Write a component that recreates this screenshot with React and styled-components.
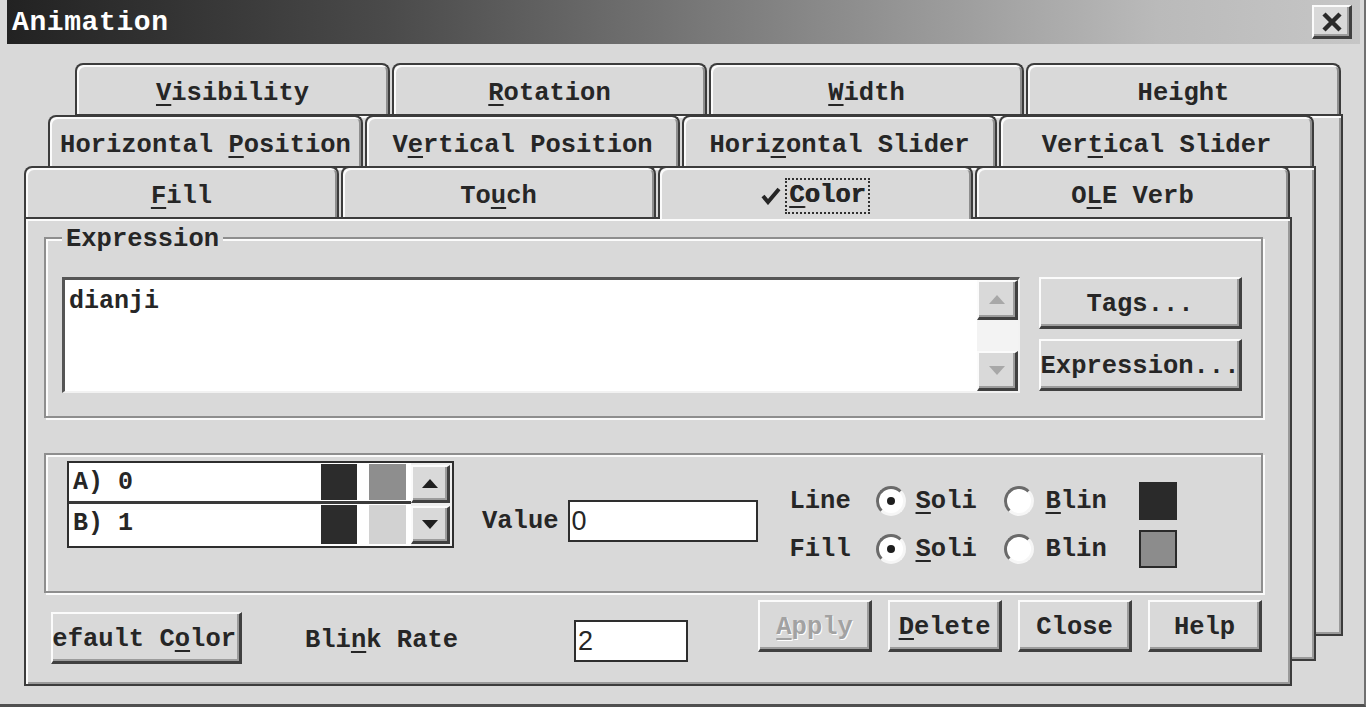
import styled, { createGlobalStyle, css } from "styled-components";

const GlobalStyle = createGlobalStyle`
  html, body {
    margin: 0;
    padding: 0;
    background: #d9d9d9;
  }
  body {
    font-family: "Liberation Mono", "DejaVu Sans Mono", monospace;
    color: #262626;
  }
  * {
    box-sizing: border-box;
  }
`;

const FACE = "#d9d9d9";
const DARK = "#3c3c3c";

const raised = css`
  background: ${FACE};
  border-style: solid;
  border-width: 2px 3px 3px 2px;
  border-color: #fbfbfb #404040 #404040 #fbfbfb;
  box-shadow: inset -2px -2px 0 #9c9c9c;
`;

const Window = styled.div`
  width: 1366px;
  height: 707px;
  padding: 0 4px 0 7px;
  border-right: 2px solid #707070;
  border-bottom: 3px solid #505050;
  background: ${FACE};
  display: flex;
  flex-direction: column;
  overflow: hidden;
`;

const TitleBar = styled.div`
  height: 44px;
  flex: 0 0 44px;
  display: flex;
  align-items: center;
  justify-content: space-between;
  padding: 0 8px 0 5px;
  background: linear-gradient(90deg, #222 0%, #4a4a4a 28%, #858585 58%, #bababa 85%, #c6c6c6 100%);
`;

const Title = styled.span`
  font-size: 28px;
  font-weight: 700;
  color: #fff;
  letter-spacing: 0.6px;
`;

const CloseButton = styled.div`
  ${raised};
  width: 40px;
  height: 34px;
  display: flex;
  align-items: center;
  justify-content: center;
`;

const Body = styled.div`
  padding: 19px 0 0 17px;
`;

const Deck = styled.div`
  display: grid;
  width: 1320px;
  height: 623px;
`;

const Layer = styled.div`
  grid-area: 1 / 1;
  margin-left: ${(p) => p.$x}px;
  margin-top: ${(p) => p.$y}px;
  width: 1268px;
  height: ${(p) => p.$h}px;
  display: flex;
  flex-direction: column;
`;

const TabRow = styled.div`
  display: flex;
  gap: 2px;
  height: 51px;
  flex: 0 0 51px;
  position: relative;
  z-index: 1;
`;

const Tab = styled.div`
  flex: 0 0 315px;
  height: ${(p) => (p.$active ? "53px" : "100%")};
  border: 2px solid ${DARK};
  border-bottom: none;
  border-radius: 8px 8px 0 0;
  background: ${FACE};
  box-shadow: inset 2px 2px 0 #fbfbfb, inset -2px 0 0 #8e8e8e;
  display: flex;
  align-items: center;
  justify-content: center;
  padding-top: ${(p) => (p.$active ? "4px" : "7px")};
  font-size: 25.5px;
  font-weight: 700;
  white-space: pre;
`;

const Page = styled.div`
  flex: 1;
  border: 2px solid ${DARK};
  background: ${FACE};
  box-shadow: inset 2px 2px 0 #fbfbfb, inset -2px -2px 0 #9a9a9a;
  padding: ${(p) => (p.$front ? "4px 0 0 18px" : "0")};
`;

const Mn = styled.span`
  text-decoration: underline;
  text-decoration-thickness: 2px;
  text-underline-offset: 4px;
`;

const FocusLabel = styled.span`
  display: inline-flex;
  align-items: center;
  gap: 4px;
  text-shadow: 0.6px 0 0 #262626;
`;

const Focus = styled.span`
  border: 2px dotted #303030;
  padding: 0 2px;
  line-height: 32px;
`;

const Group = styled.fieldset`
  margin: 0;
  width: ${(p) => p.$w}px;
  height: ${(p) => p.$h}px;
  border: 2px solid #8e8e8e;
  box-shadow: inset 2px 2px 0 #fbfbfb, 2px 2px 0 #fbfbfb;
  padding: ${(p) => p.$pad};
  margin-top: ${(p) => p.$mt || 0}px;
  min-inline-size: 0;
`;

const Legend = styled.legend`
  margin-left: 0;
  padding: 4px 4px 0;
  font-size: 25.5px;
  font-weight: 700;
  line-height: 26px;
  background: ${FACE};
  position: relative;
`;

const ExprRow = styled.div`
  display: flex;
  gap: 19px;
  align-items: flex-start;
`;

const TextBox = styled.div`
  width: 958px;
  height: 116px;
  background: #fff;
  border-style: solid;
  border-width: 3px 2px 2px 3px;
  border-color: #555 #f2f2f2 #f2f2f2 #555;
  display: flex;
`;

const TextValue = styled.div`
  flex: 1;
  padding: 8px 4px;
  font-size: 25px;
  font-weight: 700;
  line-height: 28px;
`;

const ScrollTrack = styled.div`
  width: 41px;
  display: flex;
  flex-direction: column;
  justify-content: space-between;
  background: #f3f3f3;
`;

const ScrollBtn = styled.div`
  ${raised};
  width: ${(p) => p.$w || 41}px;
  height: ${(p) => p.$h || 40}px;
  display: flex;
  align-items: center;
  justify-content: center;
`;

const ButtonColumn = styled.div`
  display: flex;
  flex-direction: column;
  gap: 10px;
`;

const Button = styled.div`
  ${raised};
  width: ${(p) => p.$w}px;
  height: 52px;
  margin-top: ${(p) => p.$mt || 0}px;
  display: flex;
  align-items: center;
  justify-content: ${(p) => (p.$clip ? "flex-end" : "center")};
  padding: ${(p) => (p.$clip ? "3px 3px 0 0" : "3px 0 0")};
  overflow: hidden;
  white-space: pre;
  font-size: 25.5px;
  font-weight: 700;
  color: ${(p) => (p.$disabled ? "#a2a2a2" : "#262626")};
  text-shadow: ${(p) => (p.$disabled ? "1px 1px 0 #fff" : "none")};
  flex-shrink: 0;
`;

const ColorRow = styled.div`
  display: flex;
  align-items: flex-start;
`;

const ListBox = styled.div`
  width: 387px;
  height: 87px;
  border: 2px solid #2e2e2e;
  background: #fff;
  display: flex;
`;

const ListRows = styled.div`
  flex: 1;
  display: flex;
  flex-direction: column;
`;

const ListRow = styled.div`
  height: 41px;
  display: flex;
  align-items: stretch;
  border-bottom: ${(p) => (p.$divider ? "3px solid #3a3a3a" : "none")};
`;

const RowLabel = styled.div`
  flex: 1;
  padding: 5px 0 0 4px;
  font-size: 25px;
  font-weight: 700;
  line-height: 30px;
`;

const RowSwatch = styled.div`
  width: ${(p) => p.$w}px;
  margin: 1px ${(p) => p.$mr}px 1px 0;
  background: ${(p) => p.$c};
`;

const ListScroll = styled.div`
  width: 41px;
  display: flex;
  flex-direction: column;
  justify-content: space-between;
  padding: 2px 0;
  background: #efefef;
`;

const ValueField = styled.div`
  display: flex;
  align-items: center;
  gap: 9px;
  margin: ${(p) => p.$m};
`;

const Label = styled.span`
  font-size: 25.5px;
  font-weight: 700;
  white-space: nowrap;
  margin: ${(p) => p.$m || 0};
`;

const Input = styled.div`
  width: ${(p) => p.$w}px;
  height: 42px;
  border: 2px solid #2e2e2e;
  background: #fff;
  padding-left: 2px;
  display: flex;
  align-items: center;
  font-family: "Liberation Sans", Arial, sans-serif;
  font-size: 27px;
  margin: ${(p) => p.$m || 0};
  flex-shrink: 0;
`;

const RadioGrid = styled.div`
  display: grid;
  grid-template-columns: 86px 40px 88px 42px 93px 38px;
  grid-auto-rows: 38px;
  row-gap: 10px;
  align-items: center;
  margin: 21px 0 0 32px;
`;

const Radio = styled.div`
  width: 30px;
  height: 30px;
  border-radius: 50%;
  border: 3px solid;
  border-color: #6a6a6a #f6f6f6 #f6f6f6 #6a6a6a;
  background: #fff;
  display: flex;
  align-items: center;
  justify-content: center;

  &::after {
    content: "";
    width: 8px;
    height: 8px;
    border-radius: 50%;
    background: ${(p) => (p.$checked ? "#1e1e1e" : "transparent")};
  }
`;

const Swatch = styled.div`
  width: 38px;
  height: 38px;
  border: 2px solid #2a2a2a;
  background: ${(p) => p.$c};
`;

const BottomRow = styled.div`
  display: flex;
  align-items: flex-start;
  margin: 4px 0 0 7px;
`;

const ActionButtons = styled.div`
  display: flex;
  gap: 16px;
  margin: 3px 0 0 70px;
`;

const Arrow = ({ up, color }) => (
  <svg width="18" height="11" viewBox="0 0 18 11">
    <path d={up ? "M9 1 L17 10 L1 10 Z" : "M1 1 L17 1 L9 10 Z"} fill={color} />
  </svg>
);

const Check = () => (
  <svg width="20" height="18" viewBox="0 0 20 18">
    <path d="M2 9 L7 15 L18 2" stroke="#262626" strokeWidth="4" fill="none" />
  </svg>
);

const backTabs = [
  <span><Mn>V</Mn>isibility</span>,
  <span><Mn>R</Mn>otation</span>,
  <span><Mn>W</Mn>idth</span>,
  <span>Height</span>,
];

const middleTabs = [
  <span>Horizontal <Mn>P</Mn>osition</span>,
  <span>V<Mn>e</Mn>rtical Position</span>,
  <span>Hori<Mn>z</Mn>ontal Slider</span>,
  <span>Ver<Mn>t</Mn>ical Slider</span>,
];

const App = () => {
  return (
    <>
      <GlobalStyle />
      <Window>
        <TitleBar>
          <Title>Animation</Title>
          <CloseButton>
            <svg width="22" height="20" viewBox="0 0 22 20">
              <path d="M3 2 L19 18 M19 2 L3 18" stroke="#2a2a2a" strokeWidth="4.5" />
            </svg>
          </CloseButton>
        </TitleBar>
        <Body>
          <Deck>
            <Layer $x={51} $y={0} $h={573}>
              <TabRow>
                {backTabs.map((t, i) => (
                  <Tab key={i}>{t}</Tab>
                ))}
              </TabRow>
              <Page />
            </Layer>
            <Layer $x={24} $y={52} $h={546}>
              <TabRow>
                {middleTabs.map((t, i) => (
                  <Tab key={i}>{t}</Tab>
                ))}
              </TabRow>
              <Page />
            </Layer>
            <Layer $x={0} $y={103} $h={520}>
              <TabRow>
                <Tab><span><Mn>F</Mn>ill</span></Tab>
                <Tab><span>To<Mn>u</Mn>ch</span></Tab>
                <Tab $active>
                  <FocusLabel>
                    <Check />
                    <Focus><Mn>C</Mn>olor</Focus>
                  </FocusLabel>
                </Tab>
                <Tab><span>O<Mn>L</Mn>E Verb</span></Tab>
              </TabRow>
              <Page $front>
                <Group $w={1219} $h={195} $pad="24px 0 0 16px">
                  <Legend>Expression</Legend>
                  <ExprRow>
                    <TextBox>
                      <TextValue>dianji</TextValue>
                      <ScrollTrack>
                        <ScrollBtn $w={41} $h={40}>
                          <Arrow up color="#a8a8a8" />
                        </ScrollBtn>
                        <ScrollBtn $w={41} $h={40}>
                          <Arrow color="#a8a8a8" />
                        </ScrollBtn>
                      </ScrollTrack>
                    </TextBox>
                    <ButtonColumn>
                      <Button $w={203}><span>Tags...</span></Button>
                      <Button $w={203}><span>Expression...</span></Button>
                    </ButtonColumn>
                  </ExprRow>
                </Group>
                <Group $w={1219} $h={140} $pad="6px 0 0 21px" $mt={35}>
                  <ColorRow>
                    <ListBox>
                      <ListRows>
                        <ListRow $divider>
                          <RowLabel>A) 0</RowLabel>
                          <RowSwatch $w={36} $mr={12} $c="#2c2c2c" />
                          <RowSwatch $w={37} $mr={5} $c="#8e8e8e" />
                        </ListRow>
                        <ListRow>
                          <RowLabel>B) 1</RowLabel>
                          <RowSwatch $w={36} $mr={12} $c="#2c2c2c" />
                          <RowSwatch $w={37} $mr={5} $c="#d2d2d2" />
                        </ListRow>
                      </ListRows>
                      <ListScroll>
                        <ScrollBtn $w={39} $h={38}>
                          <Arrow up color="#1e1e1e" />
                        </ScrollBtn>
                        <ScrollBtn $w={39} $h={38}>
                          <Arrow color="#1e1e1e" />
                        </ScrollBtn>
                      </ListScroll>
                    </ListBox>
                    <ValueField $m="39px 0 0 28px">
                      <Label>Value</Label>
                      <Input $w={190}>0</Input>
                    </ValueField>
                    <RadioGrid>
                      <Label>Line</Label>
                      <Radio $checked />
                      <Label><Mn>S</Mn>oli</Label>
                      <Radio />
                      <Label><Mn>B</Mn>lin</Label>
                      <Swatch $c="#2a2a2a" />
                      <Label>Fill</Label>
                      <Radio $checked />
                      <Label><Mn>S</Mn>oli</Label>
                      <Radio />
                      <Label>Blin</Label>
                      <Swatch $c="#8c8c8c" />
                    </RadioGrid>
                  </ColorRow>
                </Group>
                <BottomRow>
                  <Button $w={191} $mt={15} $clip>
                    <span>Default C<Mn>o</Mn>lor</span>
                  </Button>
                  <Label $m="29px 0 0 63px">
                    Bli<Mn>n</Mn>k Rate
                  </Label>
                  <Input $w={114} $m="23px 0 0 116px">2</Input>
                  <ActionButtons>
                    <Button $w={114} $disabled><span><Mn>A</Mn>pply</span></Button>
                    <Button $w={114}><span><Mn>D</Mn>elete</span></Button>
                    <Button $w={114}><span>Close</span></Button>
                    <Button $w={114}><span>Help</span></Button>
                  </ActionButtons>
                </BottomRow>
              </Page>
            </Layer>
          </Deck>
        </Body>
      </Window>
    </>
  );
};

export default App;
